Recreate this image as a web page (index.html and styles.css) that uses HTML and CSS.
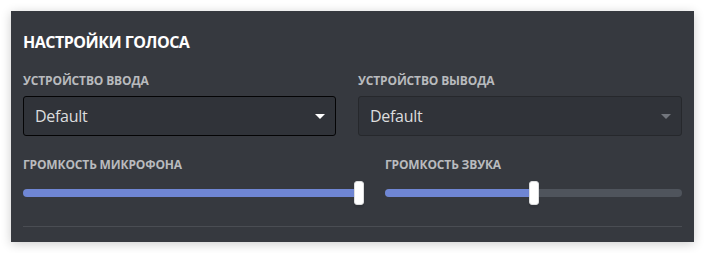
FILE: index.html
```html
<!DOCTYPE html>
<html lang="ru">
<head>
  <meta charset="UTF-8">
  <title>Настройки голоса</title>
  <link rel="stylesheet" href="styles.css">
</head>
<body>
  <div class="panel">
    <h2 class="title">Настройки голоса</h2>

    <div class="row devices">
      <div class="field">
        <h5 class="label">Устройство ввода</h5>
        <div class="select focused">
          <span>Default</span>
          <svg class="caret" width="10" height="5" viewBox="0 0 10 5"><path d="M0 0h10L5 5z" fill="#fff"/></svg>
        </div>
      </div>
      <div class="field">
        <h5 class="label">Устройство вывода</h5>
        <div class="select">
          <span>Default</span>
          <svg class="caret" width="10" height="5" viewBox="0 0 10 5"><path d="M0 0h10L5 5z" fill="#72767d"/></svg>
        </div>
      </div>
    </div>

    <div class="row volumes">
      <div class="field mic">
        <h5 class="label">Громкость микрофона</h5>
        <div class="slider">
          <div class="track"><div class="fill" style="width: 100%"></div></div>
          <div class="grabber"></div>
        </div>
      </div>
      <div class="field">
        <h5 class="label">Громкость звука</h5>
        <div class="slider">
          <div class="track"><div class="fill" style="width: 50%"></div></div>
          <div class="grabber" style="left: 50%"></div>
        </div>
      </div>
    </div>

    <div class="divider"></div>
  </div>
</body>
</html>
```

FILE: styles.css
```css
body {
  margin: 0;
  padding: 11px;
  background: #fff;
  font-family: "Open Sans", "Noto Sans", sans-serif;
}
.panel {
  width: 683px;
  height: 231px;
  box-sizing: border-box;
  padding: 21px 12px 0 12px;
  background: #36393f;
  box-shadow: 0 2px 10px rgba(0, 0, 0, 0.2);
}
.title {
  margin: 0 0 21px;
  font-size: 16px;
  line-height: 20px;
  font-weight: 700;
  letter-spacing: -0.5px;
  color: #fff;
  text-transform: uppercase;
}
.row {
  display: grid;
}
.devices {
  grid-template-columns: 313px 324px;
  column-gap: 22px;
}
.devices .label {
  margin-bottom: 7px;
}
.volumes {
  margin-top: 21px;
  grid-template-columns: 341px 297px;
  column-gap: 21px;
}
.label {
  margin: 0 0 8px;
  font-size: 12px;
  line-height: 16px;
  font-weight: 700;
  letter-spacing: -0.15px;
  text-transform: uppercase;
  color: #b9bbbe;
}
.select {
  height: 40px;
  box-sizing: border-box;
  display: flex;
  align-items: center;
  justify-content: space-between;
  padding: 0 10px 0 11px;
  background: #303339;
  border: 1px solid #26282c;
  border-radius: 3px;
  color: #dcddde;
  font-size: 16px;
  letter-spacing: -0.3px;
}
.select.focused {
  border-color: #040405;
}
.slider {
  position: relative;
  height: 24px;
  margin-top: 7px;
}
.track {
  position: absolute;
  left: 0;
  right: 0;
  top: 8px;
  height: 8px;
  border-radius: 4px;
  background: #4f545c;
  overflow: hidden;
}
.mic .track {
  right: 5px;
}
.fill {
  height: 100%;
  background: #6f86d4;
}
.grabber {
  position: absolute;
  top: 0;
  width: 10px;
  height: 24px;
  margin-left: -5px;
  box-sizing: border-box;
  background: #fff;
  border: 1px solid #dcddde;
  border-radius: 3px;
  box-shadow: 0 3px 1px rgba(0, 0, 0, 0.08);
}
.mic .grabber {
  right: 0;
  margin-left: 0;
}
.divider {
  margin-top: 21px;
  height: 1px;
  background: #4a4d53;
}
```
